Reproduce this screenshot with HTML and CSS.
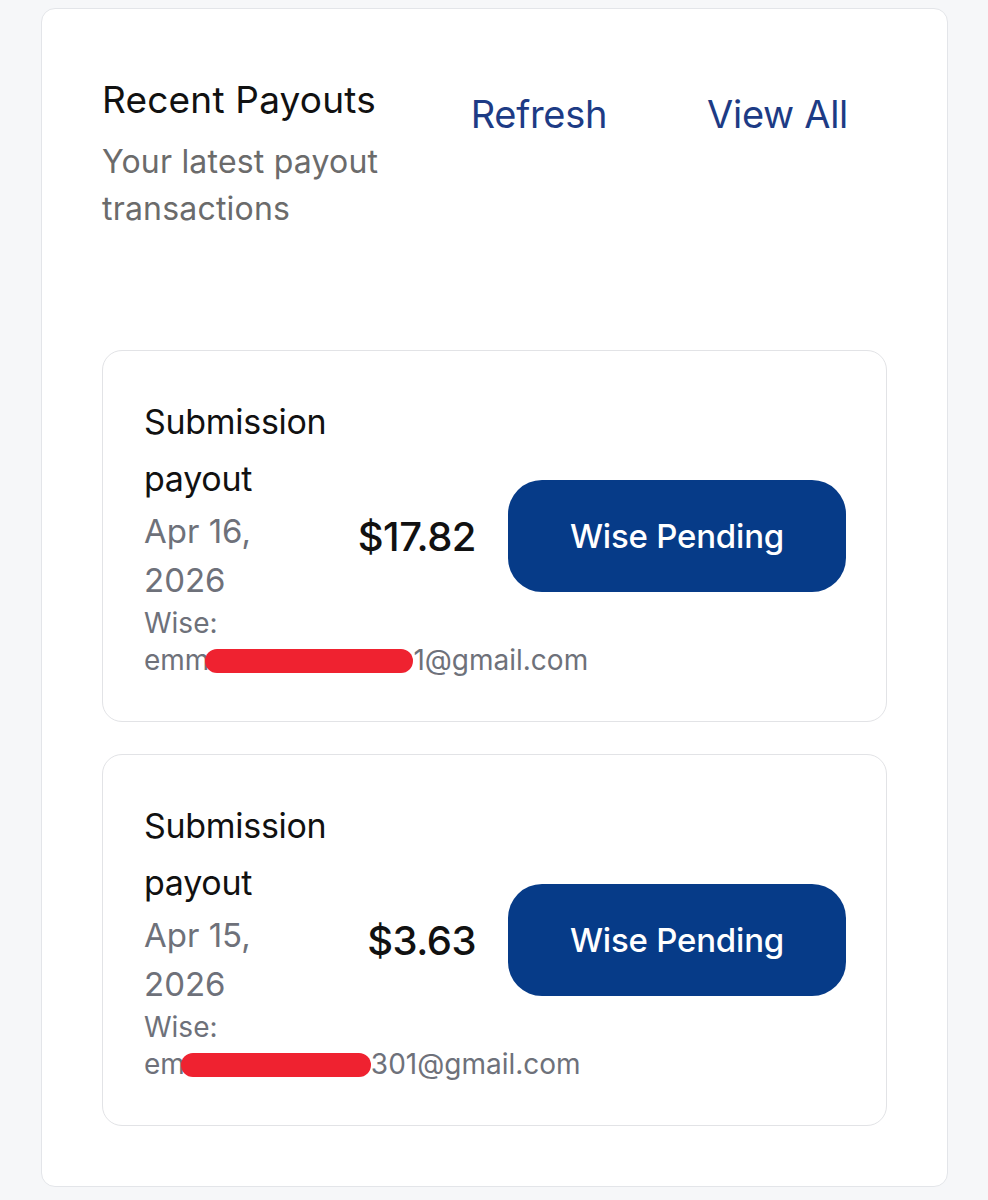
FILE: index.html
```html
<!DOCTYPE html>
<html>
 <head>
  <meta charset="utf-8">
  <title>Recent Payouts</title>
  <link rel="stylesheet" href="styles.css">
 </head>
 <body>
  <div class="panel">
   <div class="panel-head">
    <div class="head-text">
     <h2>Recent Payouts</h2>
     <p class="sub">Your latest payout transactions</p>
    </div>
    <a class="link" href="#">Refresh</a>
    <a class="link" href="#">View All</a>
   </div>

   <div class="payouts">
    <div class="payout">
     <div class="info">
      <div class="title">Submission payout</div>
      <div class="date">Apr 16, 2026</div>
      <div class="dest">Wise:<br><span class="email">emm<span class="redact r1"></span>1@gmail.com</span></div>
     </div>
     <div class="amount">$17.82</div>
     <div class="status">Wise Pending</div>
    </div>

    <div class="payout">
     <div class="info">
      <div class="title">Submission payout</div>
      <div class="date">Apr 15, 2026</div>
      <div class="dest">Wise:<br><span class="email">em<span class="redact r2"></span>301@gmail.com</span></div>
     </div>
     <div class="amount">$3.63</div>
     <div class="status">Wise Pending</div>
    </div>
   </div>
  </div>
 </body>
</html>
```

FILE: styles.css
```css
* { margin: 0; padding: 0; box-sizing: border-box; }
body { background: #f6f7f9; font-family: Inter, "Noto Sans", sans-serif; color: #111; padding: 8px 40px 0 41px; }
.panel { background: #fff; border: 1px solid #e3e5e9; border-radius: 14px; padding: 67px 60px 60px 60px; }
.panel-head { display: flex; align-items: flex-start; gap: 22px; }
.head-text { flex: 1 1 0; min-width: 0; }
.panel-head h2 { font-size: 37px; font-weight: 400; line-height: 48px; letter-spacing: 0.2px; }
.sub { font-size: 32px; line-height: 47px; color: #6b6b6b; margin-top: 14px; letter-spacing: 0.2px; }
.link { font-size: 38px; line-height: 48px; color: #1d3b85; text-decoration: none; padding: 14px 39px 0; letter-spacing: -0.3px; }
.payouts { display: flex; flex-direction: column; gap: 32px; margin-top: 118px; }
.payout { display: flex; align-items: center; gap: 32px; border: 1px solid #e2e3e6; border-radius: 20px; padding: 42px 40px 42px 41px; }
.info { flex: 1 1 0; min-width: 0; }
.title { font-size: 34px; line-height: 57px; letter-spacing: -0.3px; }
.date { font-size: 33px; line-height: 49px; color: #6e717a; }
.dest { font-size: 28px; line-height: 37px; color: #6e717a; white-space: nowrap; }
.redact { display: inline-block; height: 24px; background: #ef2230; border-radius: 12px; vertical-align: -3px; margin-left: -4px; }
.r1 { width: 208px; }
.r2 { width: 190px; }
.amount { font-size: 40px; font-weight: 500; letter-spacing: -0.5px; }
.status { width: 338px; height: 112px; border-radius: 34px; background: #063b88; color: #fff; font-size: 33px; font-weight: 500; display: flex; align-items: center; justify-content: center; letter-spacing: -0.2px; }
```
